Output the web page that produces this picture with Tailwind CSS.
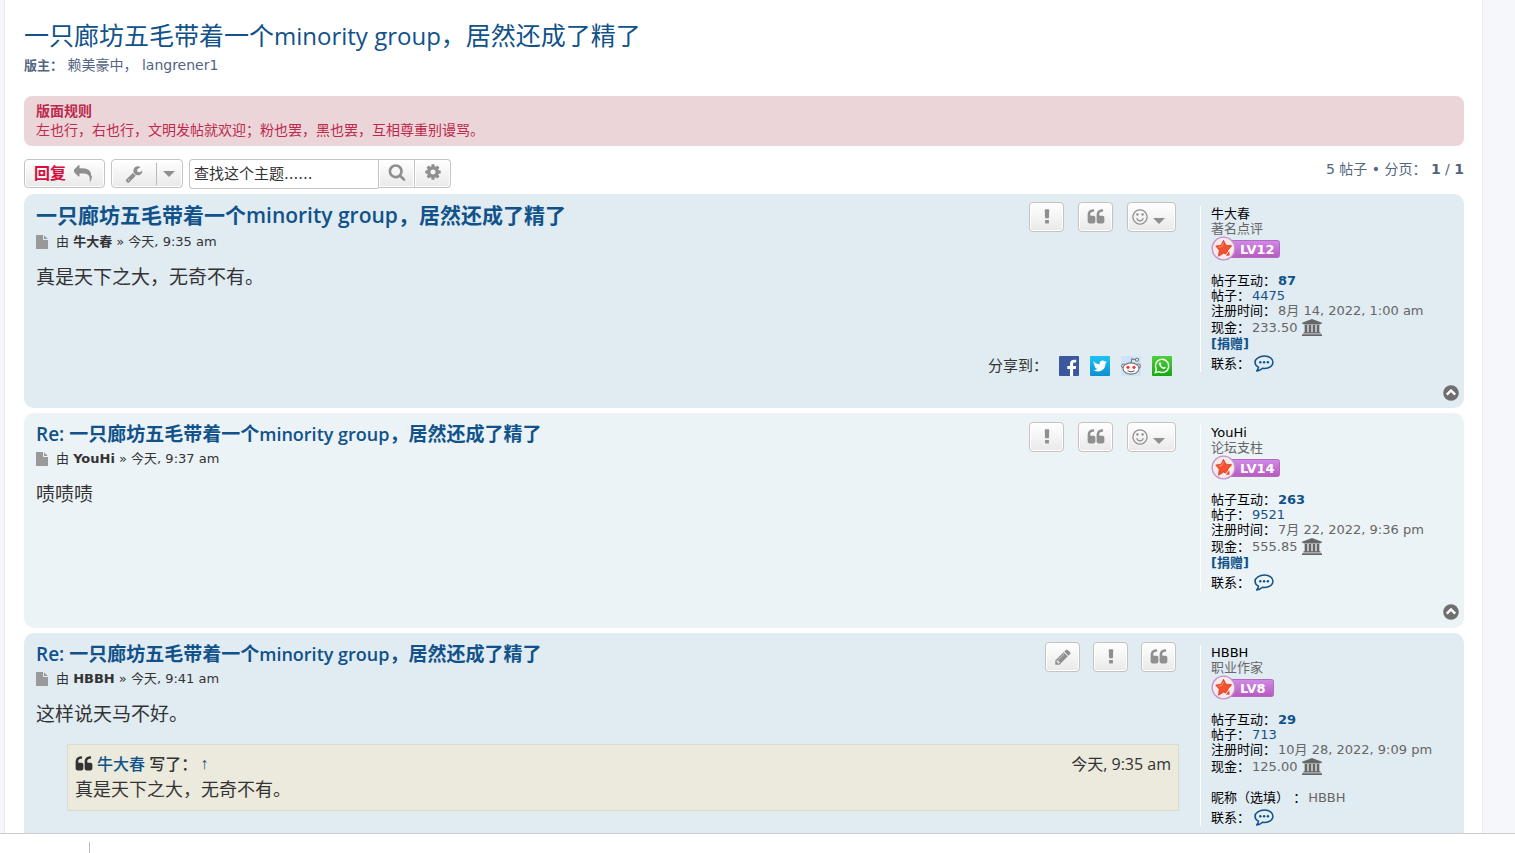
<!DOCTYPE html>
<html lang="zh-CN">
<head>
    <meta charset="UTF-8">
    <meta name="viewport" content="width=device-width, initial-scale=1.0">
    <title>一只廊坊五毛带着一个minority group，居然还成了精了</title>
    <script src="https://cdn.jsdelivr.net/npm/@tailwindcss/browser@4"></script>
</head>
<body class="bg-[#f5f7fa] font-['DejaVu_Sans','Noto_Sans_CJK_SC',sans-serif] text-[13px] leading-[15px] text-[#333]">

    <!-- icon sprite -->
    <svg class="absolute size-0" aria-hidden="true">
        <symbol id="i-reply" viewBox="0 0 1792 1792"><path d="M1792 1120q0 166-127 451-3 7-10.500 24t-13.500 30-13 22q-12 17-28 17-15 0-23.500-10t-8.500-25q0-9 2.500-26.500t2.500-23.500q5-68 5-123 0-112-19.500-200.500t-54-153.500-89-112-118-77.500-149.500-48-174.500-21.500-200-6h-224v256q0 26-19 45t-45 19-45-19l-512-512q-19-19-19-45t19-45l512-512q19-19 45-19t45 19 19 45v256h224q713 0 875 403 53 134 53 333z"/></symbol>
        <symbol id="i-wrench" viewBox="0 0 1792 1792"><path d="M448 1472q0-26-19-45t-45-19-45 19-19 45 19 45 45 19 45-19 19-45zm644-420l-682 682q-37 37-90 37-52 0-91-37l-106-108q-38-36-38-90 0-53 38-91l681-681q39 98 114.500 173.500t173.500 114.500zm634-435q0 39-23 106-47 134-164.500 217.500t-258.500 83.500q-185 0-316.500-131.500t-131.500-316.500 131.500-316.500 316.500-131.500q58 0 121.500 16.500t107.500 46.500q16 11 16 28t-16 28l-293 169v224l193 107q5-3 79-48.500t135.500-81 70.500-35.500q15 0 23.500 10t8.500 25z"/></symbol>
        <symbol id="i-search" viewBox="0 0 1792 1792"><path d="M1216 832q0-185-131.500-316.500t-316.500-131.500-316.500 131.500-131.500 316.500 131.500 316.500 316.500 131.500 316.500-131.500 131.500-316.500zm512 832q0 52-38 90t-90 38q-54 0-90-38l-343-342q-179 124-399 124-143 0-273.500-55.500t-225-150-150-225-55.500-273.500 55.500-273.500 150-225 225-150 273.500-55.500 273.500 55.500 225 150 150 225 55.500 273.500q0 220-124 399l343 343q37 37 37 90z"/></symbol>
        <symbol id="i-cog" viewBox="0 0 1792 1792"><path d="M1152 896q0-106-75-181t-181-75-181 75-75 181 75 181 181 75 181-75 75-181zm512-109v222q0 12-8 23t-20 13l-185 28q-19 54-39 91 35 50 107 138 10 12 10 25t-9 23q-27 37-99 108t-94 71q-12 0-26-9l-138-108q-44 23-91 38-16 136-29 186-7 28-36 28h-222q-14 0-24.500-8.500t-11.500-21.500l-28-184q-49-16-90-37l-141 107q-10 9-25 9-14 0-25-11-126-114-165-168-7-10-7-23 0-12 8-23 15-21 51-66.500t54-70.500q-27-50-41-99l-183-27q-13-2-21-12.500t-8-23.500v-222q0-12 8-23t19-13l186-28q14-46 39-92-40-57-107-138-10-12-10-24 0-10 9-23 26-36 98.500-107.500t94.500-71.500q13 0 26 10l138 107q44-23 91-38 16-136 29-186 7-28 36-28h222q14 0 24.500 8.500t11.500 21.500l28 184q49 16 90 37l142-107q9-9 24-9 13 0 25 10 129 119 165 170 7 8 7 22 0 12-8 23-15 21-51 66.500t-54 70.500q26 50 41 98l183 28q13 2 21 12.500t8 23.500z"/></symbol>
        <symbol id="i-caret" viewBox="0 0 12 6"><path d="M0 0h12L6 6z"/></symbol>
        <symbol id="i-quote" viewBox="0 0 1792 1792"><path d="M832 960v384q0 80-56 136t-136 56h-384q-80 0-136-56t-56-136v-704q0-104 40.500-198.500t109.500-163.500 163.500-109.500 198.500-40.500h64q26 0 45 19t19 45v128q0 26-19 45t-45 19h-64q-106 0-181 75t-75 181v32q0 40 28 68t68 28h224q80 0 136 56t56 136zm896 0v384q0 80-56 136t-136 56h-384q-80 0-136-56t-56-136v-704q0-104 40.500-198.500t109.500-163.500 163.500-109.500 198.500-40.500h64q26 0 45 19t19 45v128q0 26-19 45t-45 19h-64q-106 0-181 75t-75 181v32q0 40 28 68t68 28h224q80 0 136 56t56 136z"/></symbol>
        <symbol id="i-report" viewBox="0 0 1792 1792"><path d="M1088 1248v224q0 26-19 45t-45 19h-256q-26 0-45-19t-19-45v-224q0-26 19-45t45-19h256q26 0 45 19t19 45zm30-1056l-28 768q-1 26-20.500 45t-45.500 19h-256q-26 0-45.500-19t-20.500-45l-28-768q-1-26 17.500-45t44.500-19h320q26 0 44.500 19t17.500 45z"/></symbol>
        <symbol id="i-smile" viewBox="0 0 1792 1792"><path d="M1262 1075q-37 121-138 195t-228 74-228-74-138-195q-8-25 4-48.500t38-31.500q25-8 48.500 4t31.500 38q25 80 92.500 129.500t151.500 49.500 151.500-49.500 92.500-129.500q8-26 32-38t49-4 37 31.500 4 48.500zm-494-435q0 53-37.500 90.500t-90.500 37.500-90.500-37.500-37.500-90.500 37.500-90.500 90.500-37.500 90.500 37.500 37.500 90.500zm512 0q0 53-37.500 90.500t-90.500 37.500-90.500-37.500-37.500-90.500 37.500-90.500 90.500-37.500 90.500 37.500 37.500 90.500zm256 256q0-130-51-248.500t-136.500-204-204-136.500-248.500-51-248.500 51-204 136.500-136.500 204-51 248.500 51 248.500 136.500 204 204 136.500 248.500 51 248.500-51 204-136.500 136.500-204 51-248.500zm128 0q0 209-103 385.500t-279.500 279.500-385.500 103-385.500-103-279.500-279.500-103-385.500 103-385.500 279.500-279.500 385.500-103 385.500 103 279.500 279.500 103 385.500z"/></symbol>
        <symbol id="i-pencil" viewBox="0 0 1792 1792"><path d="M491 1536l91-91-235-235-91 91v107h128v128h107zm523-928q0-22-22-22-10 0-17 7l-542 542q-7 7-7 17 0 22 22 22 10 0 17-7l542-542q7-7 7-17zm-54-192l416 416-832 832h-416v-416zm683 96q0 53-37 90l-166 166-416-416 166-165q36-38 90-38 53 0 91 38l235 234q37 39 37 91z"/></symbol>
        <symbol id="i-file" viewBox="128 0 1536 1792"><path d="M1152 512v-472q22 14 36 28l408 408q14 14 28 36h-472zm-128 32q0 40 28 68t68 28h544v1056q0 40-28 68t-68 28h-1344q-40 0-68-28t-28-68v-1600q0-40 28-68t68-28h800v544z"/></symbol>
        <symbol id="i-bank" viewBox="0 0 1920 1792" preserveAspectRatio="none"><path d="M960 0l960 384v128h-128q0 26-20.500 45t-48.500 19h-1526q-28 0-48.500-19t-20.500-45h-128v-128zm-704 640h256v768h128v-768h256v768h128v-768h256v768h128v-768h256v768h59q28 0 48.500 19t20.500 45v64h-1664v-64q0-26 20.500-45t48.500-19h59v-768zm1595 960q28 0 48.500 19t20.500 45v128h-1920v-128q0-26 20.500-45t48.500-19h1782z"/></symbol>
        <symbol id="i-chat" viewBox="0 0 20 17"><path d="M10.500 1C15.500 1 19 3.800 19 7.200s-3.500 6.200-8.500 6.200c-.7 0-1.400 0-2-.2C6.900 14.800 4.900 15.800 2.600 16c1-1 1.700-2.200 1.900-3.800C2.300 11 1 9.200 1 7.200 1 3.800 5.500 1 10.500 1z" fill="none" stroke="currentColor" stroke-width="1.500" stroke-linejoin="round"/><circle cx="6.300" cy="7.200" r="1.200"/><circle cx="10.100" cy="7.200" r="1.200"/><circle cx="13.900" cy="7.200" r="1.200"/></symbol>
        <symbol id="i-top" viewBox="0 0 16 16"><circle cx="8" cy="8" r="7.800"/><path d="M3.800 9.600 8 5.400l4.200 4.200" fill="none" stroke="#fff" stroke-width="2.400"/></symbol>
        <symbol id="i-medal" viewBox="0 0 26 26"><circle cx="13" cy="13" r="11.800" fill="#f6e9e9" stroke="#c58fd0" stroke-width="1.400"/><path d="M13 4.500l2.500 5 6 .6-4 4.600 1.300 5.800-5.600-2.700-5.400 3.200.8-6.300-3.600-4.200 5.500-1z" fill="#f5512f" stroke="#c93a22" stroke-width=".8"/><path d="M19.500 14.500 14.500 21h5.500z" fill="#e8492c" stroke="#fff" stroke-width="1"/><path d="M12.900 7l-1.700 4-3.400.6" fill="none" stroke="#ff9c78" stroke-width="1"/></symbol>
        <linearGradient id="lv" x1="0" y1="0" x2="0" y2="1"><stop offset="0" stop-color="#cf8ce6"/><stop offset="1" stop-color="#b659bf"/></linearGradient>
        <linearGradient id="tw" x1="0" y1="0" x2="0" y2="1"><stop offset="0" stop-color="#1fc3f7"/><stop offset="1" stop-color="#0a8fd0"/></linearGradient>
        <linearGradient id="wa" x1="0" y1="0" x2="0" y2="1"><stop offset="0" stop-color="#4fd03f"/><stop offset="1" stop-color="#17a80e"/></linearGradient>
    </svg>

    <div class="ml-1 mr-8 min-h-screen border-x border-[#e6e9ed] bg-white pb-[5px] pl-[19px] pr-[18px] pt-[18px]">
        <h2 class="text-[25px] leading-[34px] text-[#105289] font-['Open_Sans','Noto_Sans_CJK_SC',sans-serif]"><a href="#">一只廊坊五毛带着一个<span class="text-[24px]">minority group</span>，居然还成了精了</a></h2>
        <p class="mt-[2px] text-[14px] leading-5 text-[#536482]"><strong class="text-[13px]">版主：</strong> <a href="#">赖美豪中</a>， <a href="#">langrener1</a></p>

        <div class="mt-5 rounded-[8px] bg-[#ecd5d8] px-3 py-[6px] text-[14px] leading-[19px] text-[#bc2a4d]">
            <strong class="block">版面规则</strong>
            左也行，右也行，文明发帖就欢迎；粉也罢，黑也罢，互相尊重别谩骂。
        </div>

        <div class="mt-[13px] flex items-start gap-[6px]">
            <a href="#" class="flex h-[29px] items-center gap-2 rounded border border-[#c7c3bf] bg-linear-to-b from-white to-[#e9e9e9] pl-[9px] pr-3 text-[16px] font-bold text-[#d31141] shadow-[inset_0_0_0_1px_#fff]">回复 <svg class="size-[18px] fill-[#8f8f8f]"><use href="#i-reply"/></svg></a>
            <button type="button" aria-label="主题工具" class="flex h-[29px] w-[72px] items-center rounded border border-[#c7c3bf] bg-linear-to-b from-white to-[#e9e9e9] shadow-[inset_0_0_0_1px_#fff]">
                <span class="flex h-[22px] w-[45px] items-center justify-center border-r border-[#b4bac0]"><svg class="size-[18px] fill-[#8f8f8f]"><use href="#i-wrench"/></svg></span>
                <svg class="ml-[6px] h-[6px] w-3 fill-[#8f8f8f]"><use href="#i-caret"/></svg>
            </button>
            <form class="flex">
                <input type="search" aria-label="查找这个主题" placeholder="查找这个主题......" class="h-[30px] w-[189px] rounded-l border border-r-0 border-[#c7c3bf] bg-white px-1 text-[15px] placeholder:text-[#333]">
                <button type="submit" aria-label="搜索" class="flex h-[29px] w-[37px] items-center justify-center border border-[#c7c3bf] bg-linear-to-b from-white to-[#e9e9e9] pb-[3px] shadow-[inset_0_0_0_1px_#fff]"><svg class="size-[18px] fill-[#8f8f8f]"><use href="#i-search"/></svg></button>
                <a href="#" aria-label="高级搜索" class="flex h-[29px] w-9 items-center justify-center rounded-r border border-l-0 border-[#c7c3bf] bg-linear-to-b from-white to-[#e9e9e9] pb-[3px] shadow-[inset_0_0_0_1px_#fff]"><svg class="size-[18px] fill-[#8f8f8f]"><use href="#i-cog"/></svg></a>
            </form>
            <div class="ml-auto text-[14px] leading-5 text-[#536482]">5 帖子 • 分页： <strong>1</strong> / <strong>1</strong></div>
        </div>

        <main class="mt-[5px] flex flex-col gap-[5px]">
            <!-- post 1 -->
            <article class="relative flex min-h-[214px] rounded-[10px] bg-[#e1ebf2] pl-3">
                <div class="flex flex-1 flex-col pb-8 pr-6 pt-2">
                    <div class="flex items-start justify-between">
                        <h3 class="text-[21px] leading-[27px] font-semibold text-[#105289] font-['Open_Sans','Noto_Sans_CJK_SC',sans-serif]"><a href="#">一只廊坊五毛带着一个minority group，居然还成了精了</a></h3>
                        <div class="-mb-4 flex gap-[14px]">
                            <button type="button" aria-label="举报" class="flex h-[30px] w-[35px] items-center justify-center rounded border border-[#c7c3bf] bg-linear-to-b from-white to-[#e9e9e9] pb-px shadow-[inset_0_0_0_1px_#fff]"><svg class="size-[18px] fill-[#8f8f8f]"><use href="#i-report"/></svg></button>
                            <button type="button" aria-label="引用" class="flex h-[30px] w-[35px] items-center justify-center rounded border border-[#c7c3bf] bg-linear-to-b from-white to-[#e9e9e9] pb-px shadow-[inset_0_0_0_1px_#fff]"><svg class="size-[18px] fill-[#8f8f8f]"><use href="#i-quote"/></svg></button>
                            <button type="button" aria-label="表情" class="flex h-[30px] w-[49px] items-center gap-1 rounded border border-[#c7c3bf] bg-linear-to-b from-white to-[#e9e9e9] pb-px pl-[3px] shadow-[inset_0_0_0_1px_#fff]"><svg class="size-[18px] fill-[#8f8f8f]"><use href="#i-smile"/></svg><svg class="mt-2 h-[6px] w-3 fill-[#8f8f8f]"><use href="#i-caret"/></svg></button>
                        </div>
                    </div>
                    <p class="mt-1 flex items-center leading-[18px]"><svg class="mr-2 h-[14px] w-3 fill-[#999]"><use href="#i-file"/></svg><span>由 <a href="#"><strong>牛大春</strong></a> » 今天, 9:35 am</span></p>
                    <p class="mt-3 text-[19px] leading-[28px]">真是天下之大，无奇不有。</p>
                    <div class="mt-auto flex items-center justify-end gap-[11px] pr-1 text-[15px] leading-5">
                        <span>分享到：</span>
                        <a href="#" aria-label="Facebook"><svg class="size-5" viewBox="0 0 20 20"><rect width="20" height="20" rx="1" fill="#3b579d"/><path d="M11 20v-7H8.300v-3H11V8c0-2.900 1.500-4.300 4.300-4.300h1.900v2.900h-1.500c-1.200 0-1.600.5-1.600 1.600V10h3.100l-.4 3h-2.700v7z" fill="#fff"/></svg></a>
                        <a href="#" aria-label="Twitter"><svg class="size-5" viewBox="0 0 20 20"><rect width="20" height="20" rx="1" fill="url(#tw)"/><path d="M3.500 5.300c1.700 1.900 3.700 2.900 6.200 3-.4-2.300 1-3.800 2.800-3.800.9 0 1.600.3 2.200.9l1.800-.7-1.100 1.600 1.500-.4-1.400 1.500c.1 4.300-3 8-7.400 8-1.700 0-3.200-.5-4.600-1.400 1.600.1 2.900-.3 3.900-1.200-1.300-.1-2.200-.8-2.600-2h1.200C4.600 10.300 3.900 9.300 3.900 7.900l1.200.3C3.700 7.200 3.100 6.800 3.500 5.300z" fill="#fff"/></svg></a>
                        <a href="#" aria-label="Reddit"><svg class="size-5" viewBox="0 0 20 20"><rect width="20" height="20" fill="#cee3f8"/><g fill="#fff" stroke="#777" stroke-width="1.100"><circle cx="2.700" cy="10" r="2"/><circle cx="17.300" cy="10" r="2"/><path d="M10 7l.8-4 5 .8" fill="none"/><circle cx="16" cy="3.800" r="1.500"/><ellipse cx="10" cy="12.500" rx="8" ry="5.600"/></g><circle cx="7" cy="11.300" r="1.600" fill="#f33"/><circle cx="13" cy="11.300" r="1.600" fill="#f33"/><path d="M6.500 14.800q3.500 2.200 7 0" fill="none" stroke="#555"/></svg></a>
                        <a href="#" aria-label="WhatsApp"><svg class="size-5" viewBox="0 0 20 20"><rect width="20" height="20" rx="1" fill="url(#wa)"/><path d="M3.300 16.700l1-3.600a6.600 6.600 0 1 1 2.600 2.600z" fill="none" stroke="#fff" stroke-width="1.400"/><path d="M7.600 6.300c-1.300.9-.9 2.600.7 4.400 1.700 1.900 3.900 3 5 1.900.9-.9.600-1.200-.1-1.500-1.100-.6-1.200-.5-1.800.2-.7.2-2.200-1-2.600-2 .7-.7.600-.9.200-1.900-.3-.9-.6-1.300-1.400-1.100z" fill="#fff"/></svg></a>
                    </div>
                </div>
                <aside class="mt-3 w-[264px] self-start border-l border-white pl-[10px] text-[#666]">
                    <a href="#" class="block text-black">牛大春</a>
                    <p>著名点评</p>
                    <svg class="block h-[25px] w-[70px]" viewBox="0 0 70 25"><rect x="14.500" y="4.500" width="54" height="17" rx="2" fill="url(#lv)" stroke="#b667c6"/><use href="#i-medal" width="25" height="25"/><text x="29" y="18" fill="#fff" class="text-[13px] font-bold">LV12</text></svg>
                    <dl class="mt-3">
                        <div class="flex gap-[2px]"><dt class="text-black">帖子互动：</dt><dd class="font-bold text-[#105289]">87</dd></div>
                        <div class="flex gap-[2px]"><dt class="text-black">帖子：</dt><dd><a href="#" class="text-[#105289]">4475</a></dd></div>
                        <div class="flex gap-[2px]"><dt class="text-black">注册时间：</dt><dd>8月 14, 2022, 1:00 am</dd></div>
                        <div class="flex h-[18px] items-center gap-[2px]"><dt class="text-black">现金：</dt><dd class="flex items-center gap-1">233.50 <svg class="h-[17px] w-5 fill-[#666]"><use href="#i-bank"/></svg></dd></div>
                        <div><a href="#" class="font-bold text-[#105289]">[捐赠]</a></div>
                        <div class="mt-[3px] flex h-[18px] items-center gap-1"><dt class="text-black">联系：</dt><dd><a href="#" aria-label="联系 牛大春" class="text-[#105289]"><svg class="h-[17px] w-5 fill-current"><use href="#i-chat"/></svg></a></dd></div>
                    </dl>
                </aside>
                <a href="#" aria-label="页首" class="absolute bottom-[7px] right-[5px]"><svg class="size-4 fill-[#6f6f6f]"><use href="#i-top"/></svg></a>
            </article>

            <!-- post 2 -->
            <article class="relative flex min-h-[215px] rounded-[10px] bg-[#ecf3f7] pl-3">
                <div class="flex flex-1 flex-col pb-8 pr-6 pt-[9px]">
                    <div class="flex items-start justify-between">
                        <h3 class="text-[19px] leading-[24px] font-semibold text-[#105289] font-['Open_Sans','Noto_Sans_CJK_SC',sans-serif]"><a href="#">Re: 一只廊坊五毛带着一个<span class="text-[18px]">minority group</span>，居然还成了精了</a></h3>
                        <div class="-mb-4 flex gap-[14px]">
                            <button type="button" aria-label="举报" class="flex h-[30px] w-[35px] items-center justify-center rounded border border-[#c7c3bf] bg-linear-to-b from-white to-[#e9e9e9] pb-px shadow-[inset_0_0_0_1px_#fff]"><svg class="size-[18px] fill-[#8f8f8f]"><use href="#i-report"/></svg></button>
                            <button type="button" aria-label="引用" class="flex h-[30px] w-[35px] items-center justify-center rounded border border-[#c7c3bf] bg-linear-to-b from-white to-[#e9e9e9] pb-px shadow-[inset_0_0_0_1px_#fff]"><svg class="size-[18px] fill-[#8f8f8f]"><use href="#i-quote"/></svg></button>
                            <button type="button" aria-label="表情" class="flex h-[30px] w-[49px] items-center gap-1 rounded border border-[#c7c3bf] bg-linear-to-b from-white to-[#e9e9e9] pb-px pl-[3px] shadow-[inset_0_0_0_1px_#fff]"><svg class="size-[18px] fill-[#8f8f8f]"><use href="#i-smile"/></svg><svg class="mt-2 h-[6px] w-3 fill-[#8f8f8f]"><use href="#i-caret"/></svg></button>
                        </div>
                    </div>
                    <p class="mt-1 flex items-center leading-[18px]"><svg class="mr-2 h-[14px] w-3 fill-[#999]"><use href="#i-file"/></svg><span>由 <a href="#"><strong>YouHi</strong></a> » 今天, 9:37 am</span></p>
                    <p class="mt-3 text-[19px] leading-[28px]">啧啧啧</p>
                </div>
                <aside class="mt-3 w-[264px] self-start border-l border-white pl-[10px] text-[#666]">
                    <a href="#" class="block text-black">YouHi</a>
                    <p>论坛支柱</p>
                    <svg class="block h-[25px] w-[70px]" viewBox="0 0 70 25"><rect x="14.500" y="4.500" width="54" height="17" rx="2" fill="url(#lv)" stroke="#b667c6"/><use href="#i-medal" width="25" height="25"/><text x="29" y="18" fill="#fff" class="text-[13px] font-bold">LV14</text></svg>
                    <dl class="mt-3">
                        <div class="flex gap-[2px]"><dt class="text-black">帖子互动：</dt><dd class="font-bold text-[#105289]">263</dd></div>
                        <div class="flex gap-[2px]"><dt class="text-black">帖子：</dt><dd><a href="#" class="text-[#105289]">9521</a></dd></div>
                        <div class="flex gap-[2px]"><dt class="text-black">注册时间：</dt><dd>7月 22, 2022, 9:36 pm</dd></div>
                        <div class="flex h-[18px] items-center gap-[2px]"><dt class="text-black">现金：</dt><dd class="flex items-center gap-1">555.85 <svg class="h-[17px] w-5 fill-[#666]"><use href="#i-bank"/></svg></dd></div>
                        <div><a href="#" class="font-bold text-[#105289]">[捐赠]</a></div>
                        <div class="mt-[3px] flex h-[18px] items-center gap-1"><dt class="text-black">联系：</dt><dd><a href="#" aria-label="联系 YouHi" class="text-[#105289]"><svg class="h-[17px] w-5 fill-current"><use href="#i-chat"/></svg></a></dd></div>
                    </dl>
                </aside>
                <a href="#" aria-label="页首" class="absolute bottom-[8px] right-[5px]"><svg class="size-4 fill-[#6f6f6f]"><use href="#i-top"/></svg></a>
            </article>

            <!-- post 3 -->
            <article class="relative flex min-h-[214px] rounded-[10px] bg-[#e1ebf2] pl-3">
                <div class="flex flex-1 flex-col pb-8 pt-[9px]">
                    <div class="flex items-start justify-between pr-6">
                        <h3 class="text-[19px] leading-[24px] font-semibold text-[#105289] font-['Open_Sans','Noto_Sans_CJK_SC',sans-serif]"><a href="#">Re: 一只廊坊五毛带着一个<span class="text-[18px]">minority group</span>，居然还成了精了</a></h3>
                        <div class="-mb-4 flex gap-[13px]">
                            <button type="button" aria-label="编辑" class="flex h-[30px] w-[35px] items-center justify-center rounded border border-[#c7c3bf] bg-linear-to-b from-white to-[#e9e9e9] pb-px shadow-[inset_0_0_0_1px_#fff]"><svg class="size-[18px] fill-[#8f8f8f]"><use href="#i-pencil"/></svg></button>
                            <button type="button" aria-label="举报" class="flex h-[30px] w-[35px] items-center justify-center rounded border border-[#c7c3bf] bg-linear-to-b from-white to-[#e9e9e9] pb-px shadow-[inset_0_0_0_1px_#fff]"><svg class="size-[18px] fill-[#8f8f8f]"><use href="#i-report"/></svg></button>
                            <button type="button" aria-label="引用" class="flex h-[30px] w-[35px] items-center justify-center rounded border border-[#c7c3bf] bg-linear-to-b from-white to-[#e9e9e9] pb-px shadow-[inset_0_0_0_1px_#fff]"><svg class="size-[18px] fill-[#8f8f8f]"><use href="#i-quote"/></svg></button>
                        </div>
                    </div>
                    <p class="mt-1 flex items-center leading-[18px]"><svg class="mr-2 h-[14px] w-3 fill-[#999]"><use href="#i-file"/></svg><span>由 <a href="#"><strong>HBBH</strong></a> » 今天, 9:41 am</span></p>
                    <p class="mt-3 text-[19px] leading-[28px]">这样说天马不好。</p>
                    <blockquote class="ml-[31px] mr-[21px] mt-4 border border-[#dbdbce] bg-[#ebeadd] px-[7px] pb-[7px] pt-[6px] text-[18px] leading-[26px]">
                        <div class="flex items-center text-[16px] font-['Open_Sans','Noto_Sans_CJK_SC',sans-serif]">
                            <svg class="mr-1 size-[18px] fill-[#333]"><use href="#i-quote"/></svg>
                            <cite class="font-medium not-italic"><a href="#" class="text-[#105289]">牛大春</a> 写了：</cite>
                            <a href="#" aria-label="查看原帖" class="ml-[3px] text-[#105289] font-['Liberation_Sans',sans-serif]">↑</a>
                            <span class="ml-auto">今天, 9:35 am</span>
                        </div>
                        真是天下之大，无奇不有。
                    </blockquote>
                </div>
                <aside class="mt-3 w-[264px] self-start border-l border-white pl-[10px] text-[#666]">
                    <a href="#" class="block text-black">HBBH</a>
                    <p>职业作家</p>
                    <svg class="block h-[25px] w-[64px]" viewBox="0 0 64 25"><rect x="14.500" y="4.500" width="48" height="17" rx="2" fill="url(#lv)" stroke="#b667c6"/><use href="#i-medal" width="25" height="25"/><text x="29" y="18" fill="#fff" class="text-[13px] font-bold">LV8</text></svg>
                    <dl class="mt-3">
                        <div class="flex gap-[2px]"><dt class="text-black">帖子互动：</dt><dd class="font-bold text-[#105289]">29</dd></div>
                        <div class="flex gap-[2px]"><dt class="text-black">帖子：</dt><dd><a href="#" class="text-[#105289]">713</a></dd></div>
                        <div class="flex gap-[2px]"><dt class="text-black">注册时间：</dt><dd>10月 28, 2022, 9:09 pm</dd></div>
                        <div class="flex h-[18px] items-center gap-[2px]"><dt class="text-black">现金：</dt><dd class="flex items-center gap-1">125.00 <svg class="h-[17px] w-5 fill-[#666]"><use href="#i-bank"/></svg></dd></div>
                        <div class="mt-[15px] flex gap-[2px]"><dt class="text-black">昵称（选填） ：</dt><dd>HBBH</dd></div>
                        <div class="mt-[3px] flex h-[18px] items-center gap-1"><dt class="text-black">联系：</dt><dd><a href="#" aria-label="联系 HBBH" class="text-[#105289]"><svg class="h-[17px] w-5 fill-current"><use href="#i-chat"/></svg></a></dd></div>
                    </dl>
                </aside>
            </article>
        </main>
    </div>

    <!-- bottom bar -->
    <div class="fixed inset-x-0 bottom-0 h-5 border-t border-[#ccc] bg-white pl-[89px] pt-2">
        <div class="h-full w-px bg-[#bbb]"></div>
    </div>
</body>
</html>
